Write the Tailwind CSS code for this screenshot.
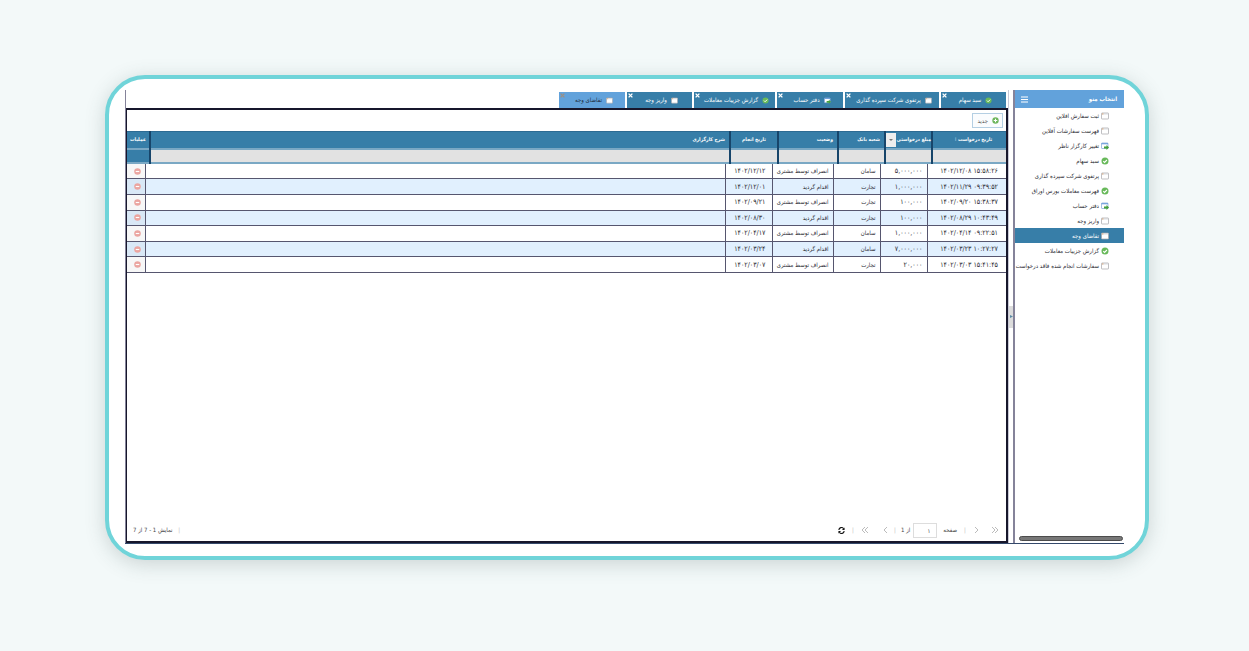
<!DOCTYPE html>
<html lang="fa" dir="rtl">
<head>
<meta charset="utf-8">
<meta name="viewport" content="width=device-width, initial-scale=1">
<title>تقاضای وجه</title>
<script src="https://cdn.jsdelivr.net/npm/@tailwindcss/browser@4"></script>
</head>
<body class="flex min-h-screen bg-[#f3f9f9] pt-[75px] pr-[100px] pb-[91px] pl-[105px] font-['DejaVu_Sans_Condensed','DejaVu_Sans',sans-serif] text-[6px] leading-[10px] text-[#2b2b33]">
<svg class="hidden">
  <symbol id="i-win" viewBox="0 0 16 16"><rect x="1" y="2" width="14" height="12" rx="1" fill="#fff" stroke="#a3a3a8" stroke-width="1.4"/><path d="M2 4h3" stroke="#c9894f" stroke-width="1.6"/><path d="M5 4h9" stroke="#c9cdd2" stroke-width="1.4"/></symbol>
  <symbol id="i-edit" viewBox="0 0 16 16"><rect x="1" y="2" width="13" height="11" rx="1" fill="#fff" stroke="#7fa5d8" stroke-width="1.4"/><path d="M1 3.500h13" stroke="#5c93d6" stroke-width="2"/><path d="M6 9h5V6l5 5-5 5v-3H6z" fill="#45a13c"/></symbol>
  <symbol id="i-ok" viewBox="0 0 16 16"><circle cx="8" cy="8" r="7" fill="#68b95a"/><path d="M4.500 8.200l2.600 2.600L11.800 6" fill="none" stroke="#fff" stroke-width="2.200"/></symbol>
  <symbol id="i-add" viewBox="0 0 16 16"><circle cx="8" cy="8" r="7.300" fill="#6fb65d"/><path d="M8 4v8M4 8h8" stroke="#fff" stroke-width="2.400"/></symbol>
  <symbol id="i-del" viewBox="0 0 16 16"><circle cx="8" cy="8" r="7.500" fill="#eba5a0"/><path d="M4 8h8" stroke="#fff" stroke-width="2.600"/></symbol>
  <symbol id="i-x" viewBox="0 0 8 8"><path d="M1 1l6 6M7 1L1 7" stroke="currentColor" stroke-width="2.200"/></symbol>
</svg>
<div class="flex min-w-0 flex-1 rounded-[40px] border-4 border-[#70d4d9] bg-white pt-[11px] pr-[21px] pb-3 pl-4 shadow-[0_4px_20px_rgba(60,80,80,0.22)]">
  <div class="flex min-w-0 flex-1 border-b border-[#34496b]">

    <aside class="flex w-[111px] shrink-0 flex-col border-l-2 border-[#85839a]">
      <header class="flex h-[18px] items-center justify-between bg-[#62a2db] pr-[7px] pl-1.5 text-white">
        <h1 class="font-bold">انتخاب منو</h1>
        <button class="flex" aria-label="منو"><svg class="size-[7px]" viewBox="0 0 7 7"><path d="M0 1h7M0 3.500h7M0 6h7" stroke="#fff"/></svg></button>
      </header>
      <nav id="menu" class="flex flex-1 flex-col"></nav>
      <div class="mr-px mb-0.5 ml-1 h-[5px] rounded-full border border-[#4c4c4c] bg-[#777]"></div>
    </aside>

    <div class="flex w-[5px] shrink-0 flex-col justify-center border-l border-[#c9c9d6]">
      <button class="flex h-[22px] items-center justify-center bg-[#dcdcdc]" aria-label="بستن منو"><svg class="size-[3px]" viewBox="0 0 3 3"><path d="M0 0l3 1.500L0 3z" fill="#5a8aa4"/></svg></button>
    </div>

    <main class="flex min-w-0 flex-1 flex-col border-l border-[#85839a]">
      <div id="tabs" role="tablist" class="flex h-[18px] items-end gap-0.5 pt-0.5 pr-0.5"></div>
      <section class="flex flex-1 flex-col border-2 border-l border-[#17172c]">
        <div class="flex h-[21px] items-start px-[3px] pt-[3px]">
          <button class="flex h-[15px] items-center gap-1 border border-[#b4cfe3] bg-[#fafcfe] pr-[3px] pl-1 text-[#555]"><svg class="size-[7px]"><use href="#i-add"/></svg>جدید</button>
        </div>
        <table class="w-full table-fixed border-collapse text-white">
          <thead>
            <tr class="h-4 border-t border-[#2d6b93] bg-[#377ea8] text-[5px]">
              <th class="w-[74px] border-l-2 border-[#17456a] pt-0.5 pb-1 pl-2 text-center">تاریخ درخواست <span class="text-[#9cc4dd]">⁞</span></th>
              <th class="w-[47px] border-l-2 border-[#17456a] p-0"><div class="flex h-[14px] items-start justify-between whitespace-nowrap"><span class="pt-px">مبلغ درخواستی</span><button class="flex h-full w-[10px] shrink-0 items-center justify-center bg-[#eee]" aria-label="گزینه‌های ستون"><svg class="h-0.5 w-1" viewBox="0 0 4 2"><path d="M0 0h4L2 2z" fill="#777"/></svg></button></div></th>
              <th class="w-[47px] border-l-2 border-[#17456a] pt-0.5 pr-1 pb-1 text-right">شعبه بانک</th>
              <th class="w-[60px] border-l-2 border-[#17456a] pt-0.5 pr-1 pb-1 text-right">وضعیت</th>
              <th class="w-[48px] border-l-2 border-[#17456a] pt-0.5 pb-1 text-center">تاریخ انجام</th>
              <th class="border-l-2 border-[#17456a] pt-0.5 pr-1 pb-1 text-right">شرح کارگزاری</th>
              <th class="w-[23px] pt-0.5 pb-1 text-center">عملیات</th>
            </tr>
            <tr id="filters" class="border-y-2 border-[#7aa8c4] bg-[#e2e2e2]"></tr>
          </thead>
        </table>
        <table class="h-[109px] w-full table-fixed border-collapse text-right">
          <tbody id="rows"></tbody>
        </table>
        <footer class="mt-auto flex h-[22px] items-center justify-between pr-[7px] pl-1.5 text-[#444]">
          <div class="flex items-center text-[#bbb]">
            <button class="flex w-2" aria-label="صفحه نخست"><svg class="size-2" viewBox="0 0 8 8"><path d="M1 1l3 3-3 3M4 1l3 3-3 3" fill="none" stroke="#bbb"/></svg></button>
            <button class="mr-2.5 flex w-2" aria-label="صفحه قبل"><svg class="size-2" viewBox="0 0 8 8"><path d="M2 1l3 3-3 3" fill="none" stroke="#bbb"/></svg></button>
            <span class="w-4 text-center">|</span>
            <label for="page" class="text-[#444]">صفحه</label>
            <input id="page" value="۱" class="mr-1.5 h-[15px] w-6 border border-[#ddd] pr-1.5 text-[#444]">
            <span class="mr-[3px] text-[#444]">از 1</span>
            <span class="w-3 text-center">|</span>
            <button class="flex w-2" aria-label="صفحه بعد"><svg class="size-2" viewBox="0 0 8 8"><path d="M6 1L3 4l3 3" fill="none" stroke="#bbb"/></svg></button>
            <button class="mr-3 flex w-2" aria-label="صفحه آخر"><svg class="size-2" viewBox="0 0 8 8"><path d="M7 1L4 4l3 3M4 1L1 4l3 3" fill="none" stroke="#bbb"/></svg></button>
            <span class="w-4 text-center">|</span>
            <button class="flex" aria-label="بازخوانی"><svg class="size-[7px]" viewBox="0 0 16 16"><path d="M2 7a6 6 0 0 1 11-3M14 9a6 6 0 0 1-11 3" fill="none" stroke="#111" stroke-width="2.600"/><path d="M15 1v6H9zM1 15V9h6z" fill="#111"/></svg></button>
          </div>
          <div><span class="ml-1 text-[#bbb]">|</span> نمایش 1 - 7 از 7</div>
        </footer>
      </section>
    </main>
  </div>
</div>
<script>
const menu = [['win','ثبت سفارش افلاین'],['win','فهرست سفارشات آفلاین'],['edit','تغییر کارگزار ناظر'],['ok','سبد سهام'],['win','پرتفوی شرکت سپرده گذاری'],['ok','فهرست معاملات بورس اوراق'],['edit','دفتر حساب'],['win','واریز وجه'],['win','تقاضای وجه'],['ok','گزارش جزییات معاملات'],['win','سفارشات انجام شده فاقد درخواست']];
document.getElementById('menu').innerHTML = menu.map(([i,t],n) =>
  `<a href="#" class="flex h-[15px] items-center gap-0.5 pr-[15px] whitespace-nowrap ${n===8?'bg-[#377ea8] text-white':''}"><svg class="size-2 shrink-0"><use href="#i-${i}"/></svg>${t}</a>`).join('');
const tabs = [['ok','سبد سهام','w-[65px]'],['win','پرتفوی شرکت سپرده گذاری','w-[94px]'],['edit','دفتر حساب','w-[66px]'],['ok','گزارش جزییات معاملات','w-[81px]'],['win','واریز وجه','w-[65px]'],['win','تقاضای وجه','w-[66px]']];
document.getElementById('tabs').innerHTML = tabs.map(([i,t,w],n) =>
  `<div class="relative flex h-4 items-center justify-center pl-1 ${w} ${n===5?'bg-[#62a2db] text-[#1d2b3c]':'bg-[#377ea8] text-white'}"><button role="tab" class="flex items-center gap-1 whitespace-nowrap"><svg class="size-[7px] shrink-0"><use href="#i-${i}"/></svg>${t}</button><button class="absolute top-px left-px flex ${n===5?'text-[#9a8f86]':'text-white'}" aria-label="بستن"><svg class="size-[5px]"><use href="#i-x"/></svg></button></div>`).join('');
document.getElementById('filters').innerHTML = ['تاریخ درخواست','مبلغ','شعبه','وضعیت','تاریخ انجام','شرح'].map(l =>
  `<td class="border-l-2 border-[#17456a] p-0"><input aria-label="${l}" class="block h-3 w-full text-black"></td>`).join('') + '<td class="bg-[#377ea8]"></td>';
const A='انصراف توسط مشتری', B='اقدام گردید', S='سامان', T='تجارت';
const rows = [
 ['۱۴۰۲/۱۲/۰۸ ۱۵:۵۸:۲۶','۵,۰۰۰,۰۰۰',S,A,'۱۴۰۲/۱۲/۱۲'],
 ['۱۴۰۲/۱۱/۲۹ ۰۹:۳۹:۵۲','۱,۰۰۰,۰۰۰',T,B,'۱۴۰۲/۱۲/۰۱'],
 ['۱۴۰۲/۰۹/۲۰ ۱۵:۳۸:۳۷','۱۰۰,۰۰۰',T,A,'۱۴۰۲/۰۹/۲۱'],
 ['۱۴۰۲/۰۸/۲۹ ۱۰:۴۳:۴۹','۱۰۰,۰۰۰',T,B,'۱۴۰۲/۰۸/۳۰'],
 ['۱۴۰۲/۰۴/۱۴ ۰۹:۲۲:۵۱','۱,۰۰۰,۰۰۰',S,A,'۱۴۰۲/۰۴/۱۷'],
 ['۱۴۰۲/۰۳/۲۳ ۱۰:۲۷:۲۷','۷,۰۰۰,۰۰۰',S,B,'۱۴۰۲/۰۳/۲۴'],
 ['۱۴۰۲/۰۳/۰۳ ۱۵:۴۱:۴۵','۲۰,۰۰۰',T,A,'۱۴۰۲/۰۳/۰۷']];
document.getElementById('rows').innerHTML = rows.map(([d,m,b,s,e],n) =>
  `<tr class="border-b border-[#56566f] ${n%2?'bg-[#e1f0fe]':'bg-white'}">
  <td class="w-[79px] border-l border-[#56566f] py-0 pr-2 pl-0 text-[7px] whitespace-nowrap"><bdo dir="ltr">${d}</bdo></td>
  <td class="w-[47px] border-l border-[#56566f] py-0 pr-1 pl-0 text-[7px]"><bdo dir="ltr">${m}</bdo></td>
  <td class="w-[47px] border-l border-[#56566f] py-0 pr-1 pl-0">${b}</td>
  <td class="w-[61px] border-l border-[#56566f] py-0 pr-1 pl-0 whitespace-nowrap">${s}</td>
  <td class="w-[47px] border-l border-[#56566f] py-0 pr-1.5 pl-0 text-[7px]"><bdo dir="ltr">${e}</bdo></td>
  <td class="border-l border-[#56566f] p-0"></td>
  <td class="w-[18px] bg-black/3 p-0"><button class="mr-1 flex" aria-label="حذف"><svg class="size-[7px]"><use href="#i-del"/></svg></button></td></tr>`).join('');
</script>
</body>
</html>
